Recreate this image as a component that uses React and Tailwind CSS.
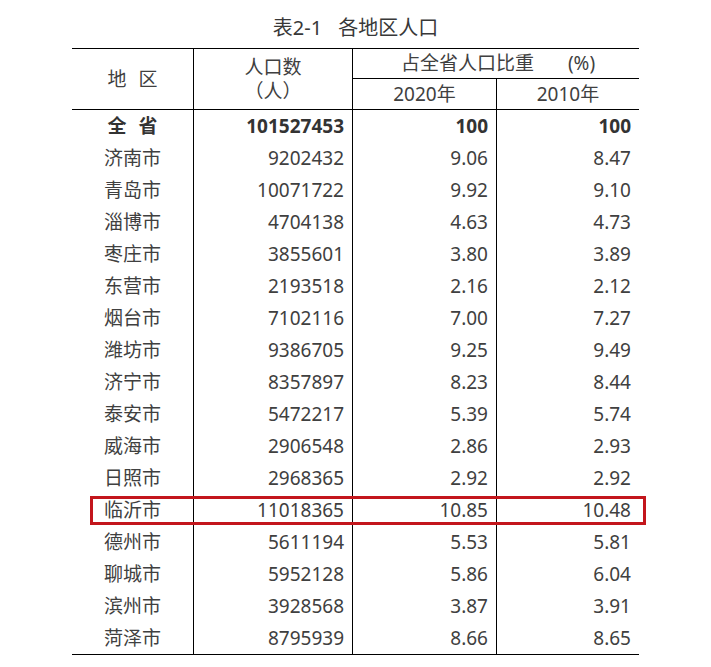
const rows = [
  [["全", "省"], "101527453", "100", "100", true],
  ["济南市", "9202432", "9.06", "8.47"],
  ["青岛市", "10071722", "9.92", "9.10"],
  ["淄博市", "4704138", "4.63", "4.73"],
  ["枣庄市", "3855601", "3.80", "3.89"],
  ["东营市", "2193518", "2.16", "2.12"],
  ["烟台市", "7102116", "7.00", "7.27"],
  ["潍坊市", "9386705", "9.25", "9.49"],
  ["济宁市", "8357897", "8.23", "8.44"],
  ["泰安市", "5472217", "5.39", "5.74"],
  ["威海市", "2906548", "2.86", "2.93"],
  ["日照市", "2968365", "2.92", "2.92"],
  ["临沂市", "11018365", "10.85", "10.48", false, true],
  ["德州市", "5611194", "5.53", "5.81"],
  ["聊城市", "5952128", "5.86", "6.04"],
  ["滨州市", "3928568", "3.87", "3.91"],
  ["菏泽市", "8795939", "8.66", "8.65"],
];

const font = { fontFamily: '"Noto Sans", "Noto Sans CJK SC", sans-serif' };

// two-character labels are spread apart like "地 区"
const Spread = ({ chars }) => (
  <span className="flex gap-[12px]">
    {chars.map((c) => (
      <span key={c}>{c}</span>
    ))}
  </span>
);

const Row = ({ name, pop, p2020, p2010, bold, marked }) => (
  <div
    className={`relative grid grid-cols-[121px_159px_144px_143px] h-[32px] items-center text-[19px] leading-none ${
      bold ? "font-bold text-[#333]" : "text-[#404040]"
    }`}
  >
    <div className="flex h-full items-center justify-center">
      {Array.isArray(name) ? <Spread chars={name} /> : name}
    </div>
    <div className="flex h-full items-center justify-end border-l border-black pr-[8px]">{pop}</div>
    <div className="flex h-full items-center justify-end border-l border-black pr-[8px]">{p2020}</div>
    <div className="flex h-full items-center justify-end border-l border-black pr-[8px]">{p2010}</div>
    {marked && (
      <div className="absolute left-[18px] -right-[7px] top-[2px] bottom-[1px] border-[3px] border-[#c3161c]" />
    )}
  </div>
);

const App = () => {
  return (
    <div className="w-[711px] h-[667px] bg-white text-[#404040]" style={font}>
      <h1 className="pt-[14px] h-[48px] text-center text-[20px] leading-[28px] text-[#383838]">
        表2-1<span className="ml-[16px]">各地区人口</span>
      </h1>
      <div className="mx-auto w-[567px]">
        {/* header */}
        <div className="grid grid-cols-[121px_159px_144px_143px] grid-rows-[30px_30px] border-y border-black text-[19px] leading-none">
          <div className="row-span-2 flex items-center justify-center">
            <Spread chars={["地", "区"]} />
          </div>
          <div className="row-span-2 flex flex-col items-center justify-center gap-[5px] border-l border-black">
            <span>人口数</span>
            <span>（人）</span>
          </div>
          <div className="col-span-2 flex items-center justify-center border-l border-b border-black pl-[4px]">
            占全省人口比重<span className="ml-[34px]">(%)</span>
          </div>
          <div className="flex items-center justify-center border-l border-black">2020年</div>
          <div className="flex items-center justify-center border-l border-black">2010年</div>
        </div>
        {/* body */}
        <div className="border-b border-black">
          {rows.map(([name, pop, p2020, p2010, bold, marked]) => (
            <Row key={pop} name={name} pop={pop} p2020={p2020} p2010={p2010} bold={bold} marked={marked} />
          ))}
        </div>
      </div>
    </div>
  );
};

export default App;
